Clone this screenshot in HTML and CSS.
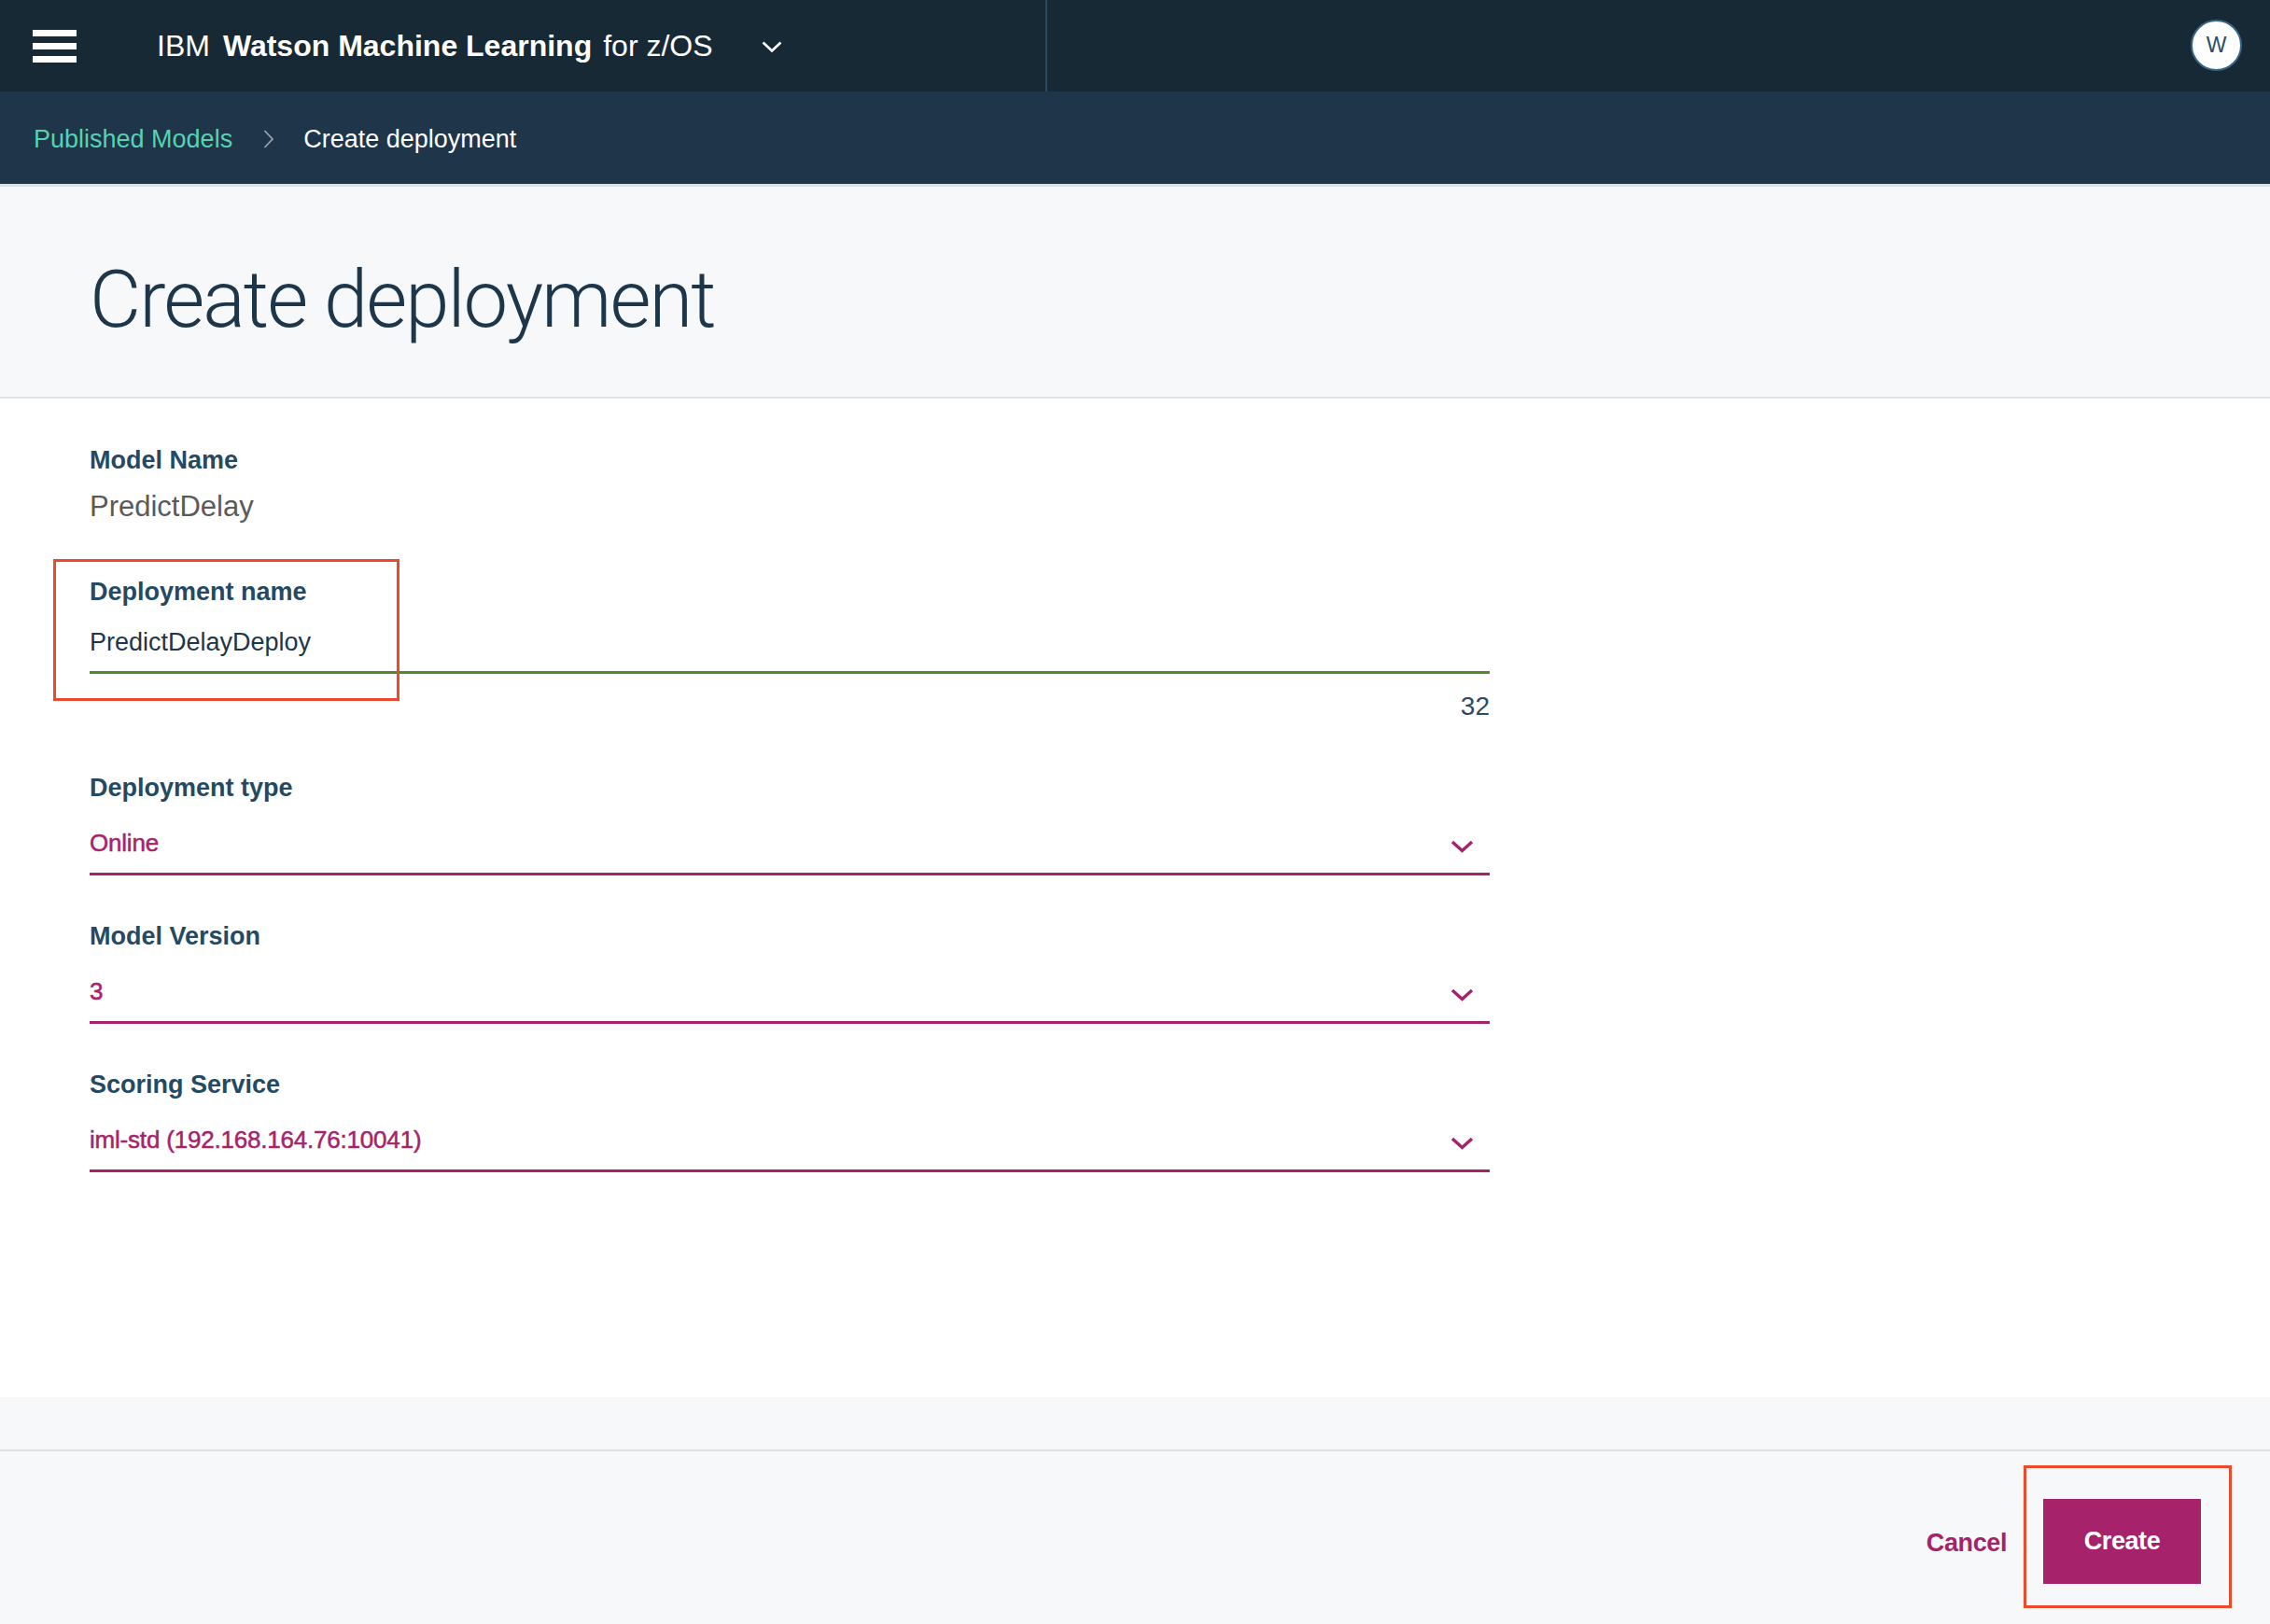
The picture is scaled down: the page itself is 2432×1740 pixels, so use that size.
FILE: index.html
```html
<!DOCTYPE html>
<html lang="en">
<head>
<meta charset="utf-8">
<title>Create deployment</title>
<link rel="stylesheet" href="styles.css">
</head>
<body>
<header class="topbar">
  <div class="hamburger" aria-label="Menu"><span></span><span></span><span></span></div>
  <div class="product"><span class="product-ibm">IBM</span><strong>Watson Machine Learning</strong><span class="product-suffix">for z/OS</span></div>
  <svg class="product-caret" width="22" height="13" viewBox="0 0 22 13"><polyline points="1.5,1.5 11,10.5 20.5,1.5" fill="none" stroke="#ffffff" stroke-width="2.6"/></svg>
  <div class="topbar-divider"></div>
  <div class="topbar-spacer"></div>
  <div class="avatar">W</div>
</header>

<nav class="breadcrumb">
  <a class="crumb-link">Published Models</a>
  <svg class="crumb-sep" width="12" height="20" viewBox="0 0 12 20"><polyline points="1.5,1 10,10 1.5,19" fill="none" stroke="#98a4ad" stroke-width="1.8"/></svg>
  <span class="crumb-current">Create deployment</span>
</nav>

<section class="page-header">
  <h1 class="page-title">Create deployment</h1>
</section>

<main class="form">
  <div class="field field-static">
    <div class="field-label">Model Name</div>
    <div class="static-value">PredictDelay</div>
  </div>

  <div class="field field-text">
    <div class="annotation annotation-name"></div>
    <div class="field-label">Deployment name</div>
    <div class="text-input">PredictDelayDeploy</div>
    <div class="char-count">32</div>
  </div>

  <div class="field field-select field-first-select">
    <div class="field-label">Deployment type</div>
    <div class="select-row">
      <span class="select-value">Online</span>
      <svg class="select-caret" width="25" height="14" viewBox="0 0 25 14"><polyline points="2,2 12.5,11.5 23,2" fill="none" stroke="#a6236b" stroke-width="3.4"/></svg>
    </div>
  </div>

  <div class="field field-select">
    <div class="field-label">Model Version</div>
    <div class="select-row">
      <span class="select-value">3</span>
      <svg class="select-caret" width="25" height="14" viewBox="0 0 25 14"><polyline points="2,2 12.5,11.5 23,2" fill="none" stroke="#a6236b" stroke-width="3.4"/></svg>
    </div>
  </div>

  <div class="field field-select">
    <div class="field-label">Scoring Service</div>
    <div class="select-row">
      <span class="select-value">iml-std (192.168.164.76:10041)</span>
      <svg class="select-caret" width="25" height="14" viewBox="0 0 25 14"><polyline points="2,2 12.5,11.5 23,2" fill="none" stroke="#a6236b" stroke-width="3.4"/></svg>
    </div>
  </div>
</main>

<div class="footer-band"></div>

<footer class="actions">
  <a class="btn-cancel">Cancel</a>
  <div class="btn-wrap">
    <div class="annotation annotation-create"></div>
    <button class="btn-create">Create</button>
  </div>
</footer>
</body>
</html>
```
FILE: styles.css
```css
html, body {
  margin: 0;
  padding: 0;
}
body {
  background: #f7f8fa;
  font-family: "Liberation Sans", Arial, sans-serif;
  color: #1d364a;
  width: 2432px;
  min-height: 1740px;
}

/* ---------- Top bar ---------- */
.topbar {
  height: 98px;
  background: #182936;
  display: flex;
  align-items: center;
  position: relative;
}
.hamburger {
  margin-left: 35px;
  width: 47px;
  display: flex;
  flex-direction: column;
  gap: 7px;
  margin-top: 1px;
}
.hamburger span {
  display: block;
  height: 7px;
  background: #ffffff;
}
.product {
  margin-left: 86px;
  font-size: 32px;
  color: #ffffff;
  white-space: nowrap;
}
.product-ibm {
  margin-right: 14px;
}
.product strong {
  font-weight: 700;
}
.product-suffix {
  margin-left: 12px;
}
.product-caret {
  margin-left: 52px;
  margin-top: 2px;
}
.topbar-divider {
  align-self: stretch;
  width: 2px;
  background: #2b4a62;
  margin-left: 282px;
}
.topbar-spacer {
  flex: 1;
}
.avatar {
  width: 55px;
  height: 55px;
  box-sizing: border-box;
  border-radius: 50%;
  border: 2px solid #3a6585;
  background: #ffffff;
  color: #2d4d66;
  font-size: 23px;
  display: flex;
  align-items: center;
  justify-content: center;
  margin-right: 30px;
  margin-top: -1px;
}

/* ---------- Breadcrumb ---------- */
.breadcrumb {
  height: 99px;
  box-sizing: border-box;
  background: #1f354a;
  border-bottom: 3px solid #dfe1e4;
  display: flex;
  align-items: center;
  padding: 3px 0 0 36px;
  height: 102px;
  font-size: 27px;
}
.crumb-link {
  color: #56d2b4;
}
.crumb-sep {
  margin-left: 33px;
  margin-right: 31px;
}
.crumb-current {
  color: #ffffff;
}

/* ---------- Page header ---------- */
.page-header {
  box-sizing: border-box;
  border-bottom: 2px solid #dfe3e6;
  background: #f7f8fa;
  padding: 80px 0 0 96px;
  height: 227px;
}
.page-title {
  margin: 0;
  font-family: Roboto, "Liberation Sans", sans-serif;
  font-weight: 300;
  font-size: 85px;
  line-height: 82px;
  letter-spacing: -1.95px;
  color: #1d364a;
}

/* ---------- Form ---------- */
.form {
  display: block;
  background: #ffffff;
  height: 1070px;
  box-sizing: border-box;
  padding: 50px 0 0 96px;
}
.field {
  width: 1500px;
  position: relative;
}
.field-label {
  font-size: 27px;
  line-height: 32px;
  font-weight: 700;
  color: #244a63;
}
.static-value {
  margin-top: 16px;
  font-size: 31px;
  line-height: 36px;
  color: #5a5a5a;
}
.field-text {
  margin-top: 57px;
}
.text-input {
  margin-top: 22px;
  font-size: 27px;
  line-height: 32px;
  color: #1d364a;
  padding-bottom: 15px;
  border-bottom: 3px solid #508a2a;
}
.char-count {
  margin-top: 19px;
  text-align: right;
  font-size: 28px;
  line-height: 32px;
  color: #2d4c63;
}
.field-select {
  margin-top: 49px;
}
.field-first-select {
  margin-top: 55px;
}
.select-row {
  margin-top: 27px;
  display: flex;
  align-items: center;
  justify-content: space-between;
  padding-bottom: 16px;
  border-bottom: 3px solid #a6236b;
}
.select-value {
  font-size: 26px;
  line-height: 32px;
  color: #a6236b;
  -webkit-text-stroke: 0.5px #a6236b;
  letter-spacing: -0.2px;
}
.select-caret {
  align-self: flex-end;
  margin-bottom: 5px;
  margin-right: 17px;
}

/* ---------- Annotations ---------- */
.annotation {
  position: absolute;
  box-sizing: border-box;
  border: 3px solid #ec4a2c;
  pointer-events: none;
}
.annotation-name {
  left: -39px;
  top: -19px;
  width: 371px;
  height: 152px;
}
.annotation-create {
  left: -21px;
  top: -36px;
  width: 223px;
  height: 153px;
}

/* ---------- Footer ---------- */
.footer-band {
  height: 56px;
  background: #f7f8fa;
  border-bottom: 2px solid #dfe1e4;
}
.actions {
  height: 185px;
  box-sizing: border-box;
  background: #f7f8fa;
  display: flex;
  justify-content: flex-end;
  align-items: flex-start;
  padding: 51px 74px 0 0;
}
.btn-cancel {
  font-size: 27px;
  font-weight: 700;
  color: #a6236b;
  letter-spacing: -0.4px;
  line-height: 91px;
  margin-right: 39px;
  margin-top: 2px;
}
.btn-wrap {
  position: relative;
}
.btn-create {
  display: block;
  width: 169px;
  height: 91px;
  border: none;
  background: #a6236b;
  color: #ffffff;
  font-family: "Liberation Sans", Arial, sans-serif;
  font-size: 27px;
  font-weight: 700;
  letter-spacing: -0.4px;
  padding: 0;
}
```
